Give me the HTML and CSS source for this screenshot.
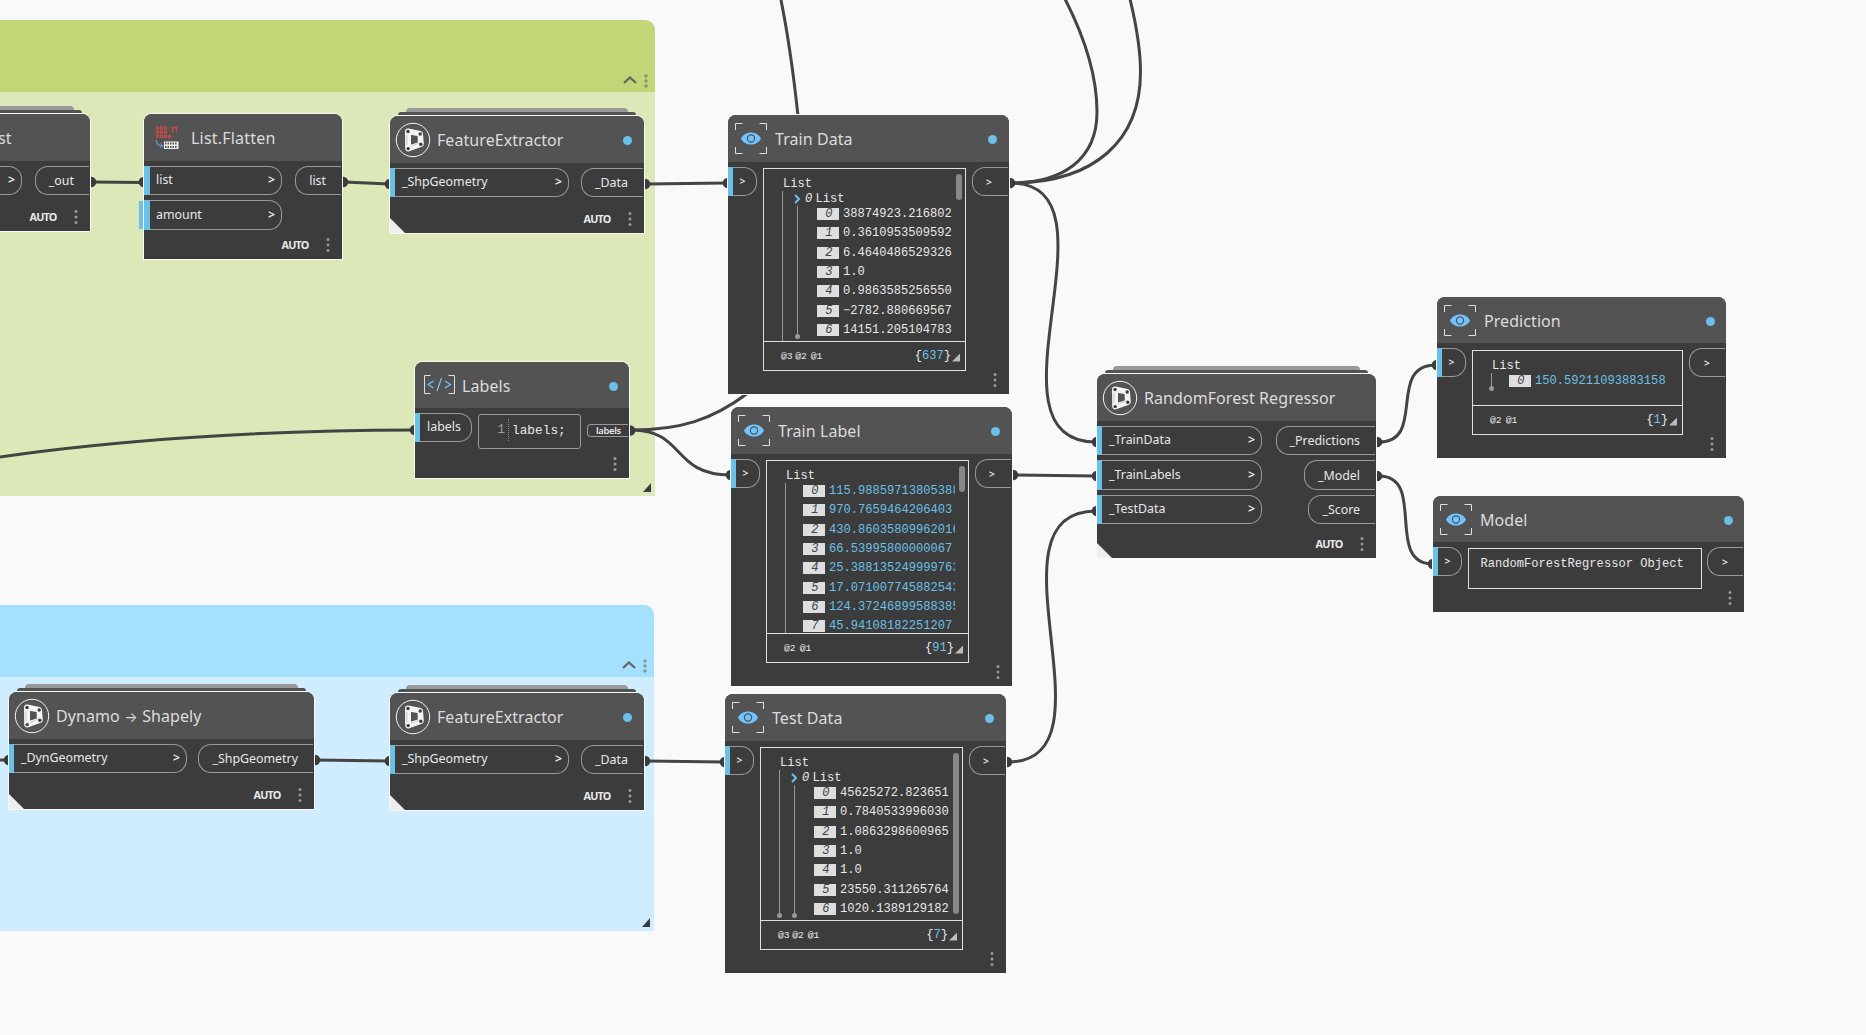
FILE: index.html
```
<!DOCTYPE html>
<html lang="en">
  <head>
    <meta charset="UTF-8" />
    <meta name="viewport" content="width=device-width, initial-scale=1" />
    <title>Random Forest Graph</title>
    <link rel="stylesheet" href="styles.css">
  </head>
  <body>
    <!-- Shared icons -->
    <svg class="defs" width="0" height="0">
      <symbol id="dots" viewBox="0 0 4 14">
        <circle cx="2" cy="1.6" r="1.5" /><circle cx="2" cy="7" r="1.5" /><circle cx="2" cy="12.4" r="1.5" />
      </symbol>
      <symbol id="dynamo" viewBox="0 0 36 36">
        <circle cx="18" cy="18" r="16.7" fill="none" stroke="#f4f4f4" stroke-width="1" />
        <path d="M13 9.5 L25 12 L25.8 22 L13.2 26.5 Z" fill="#535353" stroke="#f4f4f4" stroke-width="6" stroke-linejoin="round" />
        <path d="M16 13 L22.5 14 L22.5 20.5 L16 22.5 Z" fill="#535353" />
        <path d="M12 13 V23 M16 24.5 L24 21" stroke="#a0a0a0" stroke-width=".5" />
        <g fill="#3c3c3c">
          <circle cx="13" cy="9.5" r="1.7" /><circle cx="25.2" cy="12" r="1.7" /><circle cx="25.8" cy="22.2" r="1.7" /><circle cx="13.2" cy="26.6" r="1.7" />
        </g>
      </symbol>
      <symbol id="eye" viewBox="0 0 32 32">
        <path d="M.5 7 V.5 H7.5 M24.5 .5 H31.5 V7 M31.5 24 V30.5 H24.5 M7.5 30.5 H.5 V24" fill="none" stroke="#e0e0e0" />
        <path d="M6 15.5 C10 7.5 22 7.5 26 15.5 C22 23.5 10 23.5 6 15.5 Z" fill="#72c4ff" />
        <circle cx="16" cy="15.5" r="3.6" fill="none" stroke="#535353" stroke-width="1.2" />
        <circle cx="16" cy="15.5" r="2" fill="#72c4ff" />
      </symbol>
    </svg>

    <div class="canvas">
      <!-- Groups -->
      <div class="group green">
        <div class="group-head">
          <svg class="fold" viewBox="0 0 14 8"><path d="M1 7 L7 1.5 L13 7" /></svg>
          <svg class="grip" viewBox="0 0 4 14"><circle cx="2" cy="2" r="1.2" /><circle cx="2" cy="7" r="1.2" /><circle cx="2" cy="12" r="1.2" /></svg>
        </div>
      </div>
      <div class="group blue">
        <div class="group-head">
          <svg class="fold" viewBox="0 0 14 8"><path d="M1 7 L7 1.5 L13 7" /></svg>
          <svg class="grip" viewBox="0 0 4 14"><circle cx="2" cy="2" r="1.2" /><circle cx="2" cy="7" r="1.2" /><circle cx="2" cy="12" r="1.2" /></svg>
        </div>
      </div>

      <!-- Connectors -->
      <svg class="wires" viewBox="0 0 1866 1035">
        <g fill="none" stroke="#444" stroke-width="3">
          <path d="M92 182 L142 182.5" />
          <path d="M344 182 L389 184" />
          <path d="M646 184 L727 183" />
          <path d="M0 457 C110 441 260 430 414 430" />
          <path d="M632 430 C680 430 712 420 748 393" />
          <path d="M632 430 C685 430 672 475 730 475" />
          <path d="M781 0 Q791 50 798 116" />
          <path d="M1011 183 C1062 183 1097 160 1097 112 C1097 78 1085 38 1065 -1" />
          <path d="M1011 183 C1095 183 1140.5 140 1140.5 72 C1140.5 50 1137 28 1130 -1" />
          <path d="M1011 183 C1127 183 976 442 1096 442" />
          <path d="M1014 475 L1096 476" />
          <path d="M1008 762 C1122 762 979 511 1096 511" />
          <path d="M1379 442 C1427 442 1386 365 1436 365" />
          <path d="M1379 476 C1427 476 1384 564 1433 564" />
          <path d="M0 760 H8" />
          <path d="M315 760 L389 761" />
          <path d="M646 761 L724 762" />
        </g>
        <g fill="#3c3c3c">
          <circle cx="91" cy="182" r="5.3" /><circle cx="144" cy="182" r="5.3" />
          <circle cx="343" cy="182" r="5.3" /><circle cx="390" cy="184" r="5.3" />
          <circle cx="645" cy="184" r="5.3" /><circle cx="728" cy="183" r="5.3" />
          <circle cx="415" cy="430" r="5.3" /><circle cx="630" cy="430.5" r="5.3" />
          <circle cx="731" cy="475" r="5.3" /><circle cx="1010" cy="183" r="5.3" />
          <circle cx="1097" cy="442" r="5.3" /><circle cx="1097" cy="476" r="5.3" /><circle cx="1097" cy="511" r="5.3" />
          <circle cx="1013" cy="475" r="5.3" /><circle cx="1007" cy="762" r="5.3" />
          <circle cx="1377" cy="442" r="5.3" /><circle cx="1377" cy="476" r="5.3" />
          <circle cx="1437" cy="365" r="5.3" /><circle cx="1433" cy="564" r="5.3" />
          <circle cx="9" cy="760" r="5.3" /><circle cx="315" cy="760" r="5.3" />
          <circle cx="390" cy="761" r="5.3" /><circle cx="645" cy="761" r="5.3" /><circle cx="725" cy="762" r="5.3" />
        </g>
      </svg>

      <!-- Node cut off by the left edge -->
      <div class="node stacked edge">
        <div class="head"><h2>st</h2></div>
        <div class="ports">
          <div class="ins"><div class="in"><i>&gt;</i></div></div>
          <div class="outs"><div class="out">_out</div></div>
        </div>
        <div class="foot"><b>AUTO</b><svg class="dots"><use href="#dots" /></svg></div>
      </div>

      <div class="node flatten">
        <div class="head">
          <svg class="flat-icon" viewBox="0 0 24 24">
            <g fill="#8a4444" stroke="#c94a4a" stroke-width="1.2">
              <path d="M1.5 1 h2 v2 h-2 z M5.5 1 h2 v2 h-2 z M9.5 1 h2 v2 h-2 z M1.5 5.2 h2 v2 h-2 z M5.5 5.2 h2 v2 h-2 z M9.5 5.2 h2 v2 h-2 z M1.5 9.5 h2 v2 h-2 z M5.5 9.5 h2 v2 h-2 z M9.5 9.5 h2 v2 h-2 z M13.7 9.5 h2 v2 h-2 z" />
              <path d="M17.5 6.5 V1.5 H21.5 V6.5" fill="none" stroke-width="1.5" />
            </g>
            <path d="M1.2 14 C1.5 18 3.5 20 7 20" fill="none" stroke="#5a90bd" stroke-width="1.5" />
            <path d="M5.5 17 L9 20 L5.5 22 Z" fill="#5a90bd" />
            <path d="M9 15.5 H23.5 V23 H9 Z" fill="#eee" />
            <path d="M10 17.5 H22.500 M10 21 H22.5" stroke="#555" stroke-width="2" stroke-dasharray="1.5 1" />
          </svg>
          <h2>List.Flatten</h2>
        </div>
        <div class="ports">
          <div class="ins">
            <div class="in">list<i>&gt;</i></div>
            <div class="in default">amount<i>&gt;</i></div>
          </div>
          <div class="outs"><div class="out">list</div></div>
        </div>
        <div class="foot"><b>AUTO</b><svg class="dots"><use href="#dots" /></svg></div>
      </div>

      <div class="node stacked custom extract-train">
        <div class="head"><svg class="logo"><use href="#dynamo" /></svg><h2>FeatureExtractor</h2><span class="state"></span></div>
        <div class="ports">
          <div class="ins"><div class="in">_ShpGeometry<i>&gt;</i></div></div>
          <div class="outs"><div class="out">_Data</div></div>
        </div>
        <div class="foot"><b>AUTO</b><svg class="dots"><use href="#dots" /></svg></div>
      </div>

      <div class="node labels">
        <div class="head">
          <svg class="code-icon" viewBox="0 0 31 19">
            <path d="M6.5 .5 H.5 V18.5 H6.5 M24.5 .5 H30.5 V18.5 H24.5" fill="none" stroke="#e0e0e0" />
            <path d="M9.5 6 L4 9.5 L9.5 13 M21 6 L26.5 9.5 L21 13 M17.5 3 L13 16" fill="none" stroke="#72c4ff" stroke-width="1.2" />
          </svg>
          <h2>Labels</h2><span class="state"></span>
        </div>
        <div class="ports">
          <div class="ins"><div class="in">labels</div></div>
          <div class="code"><span class="line-no">1</span><code>labels;</code></div>
          <div class="outs"><div class="out small">labels</div></div>
        </div>
        <div class="foot"><svg class="dots"><use href="#dots" /></svg></div>
      </div>

      <div class="node watch train-data">
        <div class="head"><svg class="eye"><use href="#eye" /></svg><h2>Train Data</h2><span class="state"></span></div>
        <div class="ports">
          <div class="in"><i>&gt;</i></div>
          <div class="preview">
            <div class="tree">
              <p>List</p>
              <div class="branch running">
                <p class="sub"><svg viewBox="0 0 6 9"><path d="M1 0.5 L5 4.5 L1 8.5" /></svg><em>0</em>List</p>
                <ul class="branch end">
                  <li><em>0</em>38874923.216802</li>
                  <li><em>1</em>0.3610953509592</li>
                  <li><em>2</em>6.4640486529326</li>
                  <li><em>3</em>1.0</li>
                  <li><em>4</em>0.9863585256550</li>
                  <li><em>5</em>−2782.880669567</li>
                  <li><em>6</em>14151.205104783</li>
                </ul>
              </div>
            </div>
            <span class="scroll"></span>
            <div class="levels"><span>@3</span><span>@2</span><span>@1</span><p>{<b>637</b>}</p></div>
          </div>
          <div class="out"><i>&gt;</i></div>
        </div>
        <div class="foot"><svg class="dots"><use href="#dots" /></svg></div>
      </div>

      <div class="node watch train-label">
        <div class="head"><svg class="eye"><use href="#eye" /></svg><h2>Train Label</h2><span class="state"></span></div>
        <div class="ports">
          <div class="in"><i>&gt;</i></div>
          <div class="preview">
            <div class="tree">
              <p>List</p>
              <ul class="branch numeric">
                <li><em>0</em>115.98859713805388</li>
                <li><em>1</em>970.7659464206403</li>
                <li><em>2</em>430.86035809962016</li>
                <li><em>3</em>66.53995800000067</li>
                <li><em>4</em>25.388135249999763</li>
                <li><em>5</em>17.071007745882543</li>
                <li><em>6</em>124.37246899588385</li>
                <li><em>7</em>45.94108182251207</li>
              </ul>
            </div>
            <span class="scroll"></span>
            <div class="levels"><span>@2</span><span>@1</span><p>{<b>91</b>}</p></div>
          </div>
          <div class="out"><i>&gt;</i></div>
        </div>
        <div class="foot"><svg class="dots"><use href="#dots" /></svg></div>
      </div>

      <div class="node stacked custom shapely">
        <div class="head"><svg class="logo"><use href="#dynamo" /></svg><h2>Dynamo <span class="arrow">→</span> Shapely</h2></div>
        <div class="ports">
          <div class="ins"><div class="in">_DynGeometry<i>&gt;</i></div></div>
          <div class="outs"><div class="out">_ShpGeometry</div></div>
        </div>
        <div class="foot"><b>AUTO</b><svg class="dots"><use href="#dots" /></svg></div>
      </div>

      <div class="node stacked custom extract-test">
        <div class="head"><svg class="logo"><use href="#dynamo" /></svg><h2>FeatureExtractor</h2><span class="state"></span></div>
        <div class="ports">
          <div class="ins"><div class="in">_ShpGeometry<i>&gt;</i></div></div>
          <div class="outs"><div class="out">_Data</div></div>
        </div>
        <div class="foot"><b>AUTO</b><svg class="dots"><use href="#dots" /></svg></div>
      </div>

      <div class="node watch test-data">
        <div class="head"><svg class="eye"><use href="#eye" /></svg><h2>Test Data</h2><span class="state"></span></div>
        <div class="ports">
          <div class="in"><i>&gt;</i></div>
          <div class="preview">
            <div class="tree">
              <p>List</p>
              <div class="branch end">
                <p class="sub"><svg viewBox="0 0 6 9"><path d="M1 0.5 L5 4.5 L1 8.5" /></svg><em>0</em>List</p>
                <ul class="branch end">
                  <li><em>0</em>45625272.823651</li>
                  <li><em>1</em>0.7840533996030</li>
                  <li><em>2</em>1.0863298600965</li>
                  <li><em>3</em>1.0</li>
                  <li><em>4</em>1.0</li>
                  <li><em>5</em>23550.311265764</li>
                  <li><em>6</em>1020.1389129182</li>
                </ul>
              </div>
            </div>
            <span class="scroll"></span>
            <div class="levels"><span>@3</span><span>@2</span><span>@1</span><p>{<b>7</b>}</p></div>
          </div>
          <div class="out"><i>&gt;</i></div>
        </div>
        <div class="foot"><svg class="dots"><use href="#dots" /></svg></div>
      </div>

      <div class="node stacked custom forest">
        <div class="head"><svg class="logo"><use href="#dynamo" /></svg><h2>RandomForest Regressor</h2></div>
        <div class="ports">
          <div class="ins">
            <div class="in">_TrainData<i>&gt;</i></div>
            <div class="in">_TrainLabels<i>&gt;</i></div>
            <div class="in">_TestData<i>&gt;</i></div>
          </div>
          <div class="outs">
            <div class="out">_Predictions</div>
            <div class="out">_Model</div>
            <div class="out">_Score</div>
          </div>
        </div>
        <div class="foot"><b>AUTO</b><svg class="dots"><use href="#dots" /></svg></div>
      </div>

      <div class="node watch prediction">
        <div class="head"><svg class="eye"><use href="#eye" /></svg><h2>Prediction</h2><span class="state"></span></div>
        <div class="ports">
          <div class="in"><i>&gt;</i></div>
          <div class="preview">
            <div class="tree">
              <p>List</p>
              <ul class="branch end numeric">
                <li><em>0</em>150.59211093883158</li>
              </ul>
            </div>
            <div class="levels"><span>@2</span><span>@1</span><p>{<b>1</b>}</p></div>
          </div>
          <div class="out"><i>&gt;</i></div>
        </div>
        <div class="foot"><svg class="dots"><use href="#dots" /></svg></div>
      </div>

      <div class="node watch model">
        <div class="head"><svg class="eye"><use href="#eye" /></svg><h2>Model</h2><span class="state"></span></div>
        <div class="ports">
          <div class="in"><i>&gt;</i></div>
          <div class="preview plain">RandomForestRegressor Object</div>
          <div class="out"><i>&gt;</i></div>
        </div>
        <div class="foot"><svg class="dots"><use href="#dots" /></svg></div>
      </div>
    </div>
  </body>
</html>
```
FILE: styles.css
```
* {
  margin: 0;
  padding: 0;
  box-sizing: border-box;
}
body {
  background: #f9f9f9;
  font-family: "Noto Sans", sans-serif;
  overflow: hidden;
}
.defs {
  position: absolute;
}
.canvas {
  position: relative;
  width: 1866px;
  height: 1035px;
  overflow: hidden;
}
.wires {
  position: absolute;
  inset: 0;
}

/* Groups */
.group {
  position: absolute;
  left: 0;
  border-top-right-radius: 10px;
  overflow: hidden;
}
.group::after {
  content: "";
  position: absolute;
  right: 4px;
  bottom: 4px;
  width: 8px;
  height: 9px;
  background: #3c3c3c;
  clip-path: polygon(100% 0, 100% 100%, 0 100%);
}
.group-head {
  display: flex;
  justify-content: flex-end;
  align-items: flex-end;
  gap: 7px;
  height: 72px;
  padding: 0 7px 4px 0;
}
.green {
  top: 20px;
  width: 655px;
  height: 476px;
  background: #dce8b8;
}
.green .group-head {
  background: #c1d676;
}
.blue {
  top: 605px;
  width: 654px;
  height: 326px;
  background: #d0edff;
}
.blue .group-head {
  background: #a4e1ff;
}
.fold {
  width: 14px;
  height: 8px;
  margin-bottom: 4px;
  fill: none;
  stroke: #666;
  stroke-width: 2.3;
}
.grip {
  width: 4px;
  height: 14px;
  fill: none;
  stroke: #666;
  stroke-width: 0.8;
}

/* Nodes */
.node {
  position: absolute;
  display: flex;
  flex-direction: column;
  background: #3c3c3c;
  border-radius: 8px 8px 0 0;
  box-shadow: 0 0 0 1px #f9f9f9;
  color: #e8e8e8;
}
.head {
  display: flex;
  align-items: center;
  flex: none;
  position: relative;
  height: 47px;
  background: #535353;
  border-radius: 8px 8px 0 0;
}
h2 {
  font-size: 16px;
  font-weight: 400;
  line-height: 22px;
  letter-spacing: 0.07px;
  white-space: nowrap;
  color: #dcdcdc;
}
.arrow {
  display: inline-block;
  width: 16px;
  margin: 0 -1px;
  font-family: Inter, sans-serif;
  font-size: 14px;
  line-height: 16px;
  text-align: center;
}
.state {
  width: 9px;
  height: 9px;
  margin: 2px 12px 0 auto;
  border-radius: 50%;
  background: #6ac0e7;
}
.logo {
  width: 36px;
  height: 36px;
  margin: 0 6px 0 5px;
}
.eye {
  width: 32px;
  height: 32px;
  margin: 0 8px 0 7px;
}
.flat-icon {
  width: 24px;
  height: 24px;
  margin: 0 12px 0 11px;
}
.code-icon {
  width: 31px;
  height: 19px;
  margin: 0 7px 2px 9px;
}
.ports {
  display: flex;
  align-items: flex-start;
  justify-content: space-between;
  flex: 1;
  min-height: 0;
  padding-top: 5px;
}
.ins,
.outs {
  display: flex;
  flex-direction: column;
  gap: 5.2px;
}
.outs {
  align-items: flex-end;
}
.in,
.out {
  display: flex;
  align-items: center;
  height: 29.3px;
  border: 1px solid #999;
  font-size: 12.4px;
  line-height: 16px;
  white-space: nowrap;
}
.in {
  position: relative;
  justify-content: space-between;
  width: 179px;
  padding: 0 6px 0.5px 12px;
  border-left: 0;
  border-radius: 0 13px 13px 0;
}
.in::before {
  content: "";
  position: absolute;
  left: 0;
  top: -1px;
  bottom: -1px;
  width: 5px;
  background: #6ac0e7;
}
.out {
  margin-right: 1px;
  padding: 1px 15px 0 13px;
  border-right: 0;
  border-radius: 13px 0 0 13px;
}
.in i,
.out i {
  font-style: normal;
  font-weight: 600;
}
.foot {
  display: flex;
  justify-content: flex-end;
  align-items: center;
  gap: 17px;
  flex: none;
  height: 28px;
  padding-right: 12.5px;
}
.foot b {
  margin-top: -1px;
  font-size: 10.8px;
  letter-spacing: -0.8px;
}
.dots {
  width: 4px;
  height: 14px;
  fill: #999;
}

/* Cards drawn behind nodes that hold other nodes */
.stacked::before,
.stacked::after {
  content: "";
  position: absolute;
  border-radius: 8px 8px 0 0;
}
.stacked::before {
  left: 8px;
  right: 8px;
  top: -4px;
  height: 3px;
  background: #535353;
}
.stacked::after {
  left: 16px;
  right: 16px;
  top: -8px;
  height: 4px;
  background: #999;
}
.custom .foot::before {
  content: "";
  width: 15px;
  height: 15px;
  margin-right: auto;
  align-self: flex-end;
  background: #eee;
  clip-path: polygon(0 0, 100% 100%, 0 100%);
}

.edge {
  left: -170px;
  top: 114px;
  width: 260px;
  height: 117px;
}
.edge h2 {
  margin-left: 168px;
}
.edge .in {
  width: 192px;
  justify-content: flex-end;
}
.flatten {
  left: 144px;
  top: 114px;
  width: 198px;
  height: 145px;
}
.flatten h2 {
  letter-spacing: 0.2px;
}
.flatten .in {
  width: 138px;
}
.flatten .in::before {
  width: 6px;
}
.default::after {
  content: "";
  position: absolute;
  left: -5px;
  top: 0;
  bottom: 0;
  width: 4px;
  background: #6ac0e7;
}
.extract-train,
.extract-test {
  left: 390px;
  width: 254px;
  height: 117px;
}
.extract-train {
  top: 116px;
}
.extract-test {
  top: 693px;
}
.shapely {
  left: 9px;
  top: 692px;
  width: 305px;
  height: 117px;
}
.shapely .in {
  width: 178px;
}
.forest {
  left: 1097px;
  top: 374px;
  width: 279px;
  height: 184px;
}
.forest .in {
  width: 165px;
}
.labels {
  left: 415px;
  top: 362px;
  width: 214px;
  height: 116px;
}
.labels .in {
  width: 57px;
}
.labels .out.small {
  width: 41px;
  height: 13px;
  margin-top: 11px;
  padding: 0 0 0 8px;
  border-radius: 4px 0 0 4px;
  font-size: 9.3px;
  font-weight: 600;
  letter-spacing: -0.3px;
}
.code {
  display: flex;
  align-items: center;
  width: 103px;
  height: 35px;
  margin-top: 1px;
  padding-bottom: 3px;
  border: 1px solid #999;
  border-radius: 3px;
  font-family: "Liberation Mono", monospace;
  font-size: 12.8px;
}
.line-no {
  width: 30px;
  height: 22px;
  padding-right: 3px;
  line-height: 22px;
  text-align: right;
  color: #a89a85;
  border-right: 1px dotted #888;
}
.code code {
  padding-left: 3px;
  font-family: inherit;
}

/* Watch nodes */
.watch .in {
  width: 29px;
  justify-content: center;
  padding: 0 0 1px 1px;
}
.watch .out {
  width: 36px;
  padding: 0 0 0 13px;
}
.watch .in i,
.watch .out i {
  font-size: 10.5px;
}
.preview {
  position: relative;
  display: flex;
  flex-direction: column;
  width: 203px;
  height: 203px;
  margin-top: 1px;
  border: 1px solid #e0e0e0;
  font-family: "Liberation Mono", monospace;
  font-size: 12.1px;
}
.tree {
  flex: 1;
  min-height: 0;
  width: 191px;
  padding: 8px 0 0 18px;
  overflow: hidden;
}
.train-label .tree {
  width: 188px;
}
.tree p {
  height: 14px;
  padding-left: 1px;
  line-height: 14px;
}
.branch {
  position: relative;
  border-left: 1px solid #999;
  list-style: none;
}
.running {
  padding-bottom: 10px;
}
.end::after {
  content: "";
  position: absolute;
  left: -3px;
  bottom: 0;
  width: 5px;
  height: 5px;
  border-radius: 50%;
  background: #999;
}
.tree .sub {
  display: flex;
  align-items: center;
  height: 15px;
  padding: 0 0 0 11px;
}
.sub svg {
  width: 6px;
  height: 10px;
  margin-right: 5px;
  fill: none;
  stroke: #6ac0e7;
  stroke-width: 2;
}
.sub em {
  width: 10.5px;
}
.branch .branch {
  margin-left: 14px;
}
li {
  display: flex;
  align-items: center;
  height: 19.3px;
  padding-left: 17px;
  white-space: nowrap;
}
.branch .branch li {
  padding-left: 19px;
}
li:first-child {
  height: 17.7px;
  padding-bottom: 1.6px;
}
li em {
  flex: none;
  width: 22px;
  height: 12px;
  margin-right: 4px;
  padding-left: 2px;
  line-height: 12px;
  text-align: center;
  color: #444;
  background: #dedede;
}
.numeric {
  color: #6ac0e7;
}
.scroll {
  position: absolute;
  right: 3px;
  top: 5px;
  width: 6px;
  height: 26px;
  border-radius: 3px;
  background: #888;
}
.test-data .scroll {
  height: 161px;
}
.levels {
  display: flex;
  align-items: center;
  height: 29px;
  padding: 0 5px 0 17px;
  border-top: 1px solid #e0e0e0;
}
.levels span {
  margin: 1px 4px 0 0;
  font-size: 9.7px;
}
.levels span:first-child:nth-last-child(4) {
  margin-right: 2.5px;
}
.levels p {
  display: flex;
  align-items: center;
  margin-left: auto;
}
.levels b {
  font-weight: 400;
  color: #6ac0e7;
}
.levels p::after {
  content: "";
  width: 8px;
  height: 8px;
  margin: 3px 0 0 1px;
  background: #bbb;
  clip-path: polygon(100% 0, 100% 100%, 0 100%);
}

.train-data,
.train-label,
.test-data {
  width: 281px;
  height: 279px;
}
.train-data {
  left: 728px;
  top: 115px;
}
.train-label {
  left: 731px;
  top: 407px;
}
.test-data {
  left: 725px;
  top: 694px;
}
.prediction {
  left: 1437px;
  top: 297px;
  width: 289px;
  height: 161px;
}
.model {
  left: 1433px;
  top: 496px;
  width: 311px;
  height: 116px;
}
.labels .head,
.prediction .head,
.model .head {
  height: 46px;
  padding-top: 1px;
}
.labels .state,
.prediction .state,
.model .state {
  margin-right: 11.5px;
}
.prediction .out,
.model .out {
  padding-left: 14px;
}
.prediction .preview {
  width: 211px;
  height: 85px;
  margin-top: 2px;
}
.prediction .tree {
  width: 205px;
}
.preview.plain {
  width: 234px;
  height: 41px;
  padding: 8px 0 0 12px;
  line-height: 14px;
}
```
